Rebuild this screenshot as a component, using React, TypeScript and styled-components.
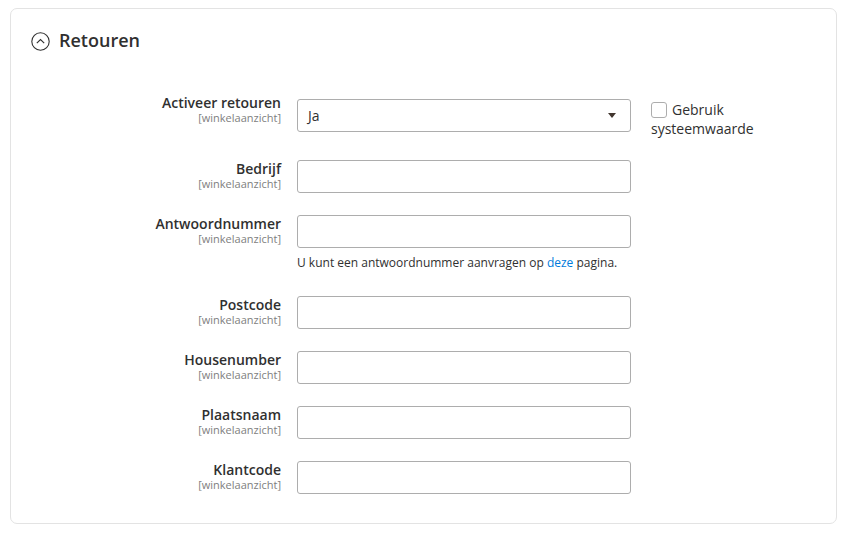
import React from "react";
import styled, { createGlobalStyle } from "styled-components";

const Global = createGlobalStyle`
  html, body { margin: 0; padding: 0; background: #ffffff; }
  body { font-family: "Open Sans", "Noto Sans", Arial, sans-serif; color: #303030; }
  * { box-sizing: border-box; }
`;

const Card = styled.section`
  margin: 8px 14px 14px 10px;
  border: 1px solid #e3e3e3;
  border-radius: 7px;
  padding: 20px 0 7px 0;
`;

const Heading = styled.div`
  display: flex;
  align-items: center;
  gap: 9px;
  padding-left: 20px;
  height: 24px;
  margin-bottom: 46px;
`;

const HeadingTitle = styled.h2`
  margin: 0;
  font-size: 18px;
  font-weight: 600;
  color: #303030;
  line-height: 24px;
  position: relative;
  top: -1px;
`;

const Form = styled.div`
  display: flex;
  flex-direction: column;
  gap: 22px;
  margin-bottom: 22px;
`;

const Row = styled.div`
  display: grid;
  grid-template-columns: 270px 334px 1fr;
  column-gap: 16px;
  align-items: start;
`;

const LabelCell = styled.div<{ $raise?: boolean }>`
  text-align: right;
  margin-top: ${(p) => (p.$raise ? "-5px" : "0")};
`;

const LabelText = styled.div`
  font-size: 14px;
  font-weight: 600;
  line-height: 17px;
  color: #303030;
`;

const Scope = styled.div`
  font-size: 11px;
  line-height: 13px;
  color: #808080;
`;

const Control = styled.div`
  display: flex;
  flex-direction: column;
`;

const Input = styled.input`
  width: 334px;
  height: 33px;
  border: 1px solid #adadad;
  border-radius: 3px;
  background: #fff;
  padding: 0 10px;
  font: inherit;
  font-size: 14px;
`;

const SelectBox = styled.div`
  width: 334px;
  height: 33px;
  border: 1px solid #adadad;
  border-radius: 3px;
  background: #fff;
  padding: 0 14px 0 10px;
  display: flex;
  align-items: center;
  justify-content: space-between;
  font-size: 14px;
  color: #303030;
`;

const Arrow = styled.span`
  width: 0;
  height: 0;
  border-left: 4px solid transparent;
  border-right: 4px solid transparent;
  border-top: 5px solid #41362f;
`;

const Note = styled.div`
  font-size: 12px;
  line-height: 18px;
  margin-top: 6px;
  margin-bottom: 2px;
  color: #303030;
`;

const Link = styled.a`
  color: #007bdb;
  text-decoration: none;
`;

const UseDefault = styled.label`
  margin-left: 4px;
  padding-top: 1px;
  font-size: 14px;
  line-height: 19px;
  color: #303030;
  max-width: 130px;
`;

const Check = styled.span`
  display: inline-block;
  width: 16px;
  height: 16px;
  border: 1px solid #adadad;
  border-radius: 3px;
  vertical-align: -3px;
  margin-right: 5px;
  background: #fff;
`;

const CollapseIcon = () => (
  <svg width="19" height="19" viewBox="0 0 19 19" aria-hidden="true">
    <circle cx="9.5" cy="9.5" r="8.7" fill="none" stroke="#303030" strokeWidth="1.1" />
    <path d="M5.8 11.2 L9.5 7.6 L13.2 11.2" fill="none" stroke="#303030" strokeWidth="1.1" />
  </svg>
);

type FieldProps = {
  label: string;
  children: React.ReactNode;
  extra?: React.ReactNode;
  raise?: boolean;
};

const Field = ({ label, children, extra, raise }: FieldProps) => (
  <Row>
    <LabelCell $raise={raise}>
      <LabelText>{label}</LabelText>
      <Scope>[winkelaanzicht]</Scope>
    </LabelCell>
    <Control>{children}</Control>
    {extra ?? <span />}
  </Row>
);

export default function App() {
  const plain = ["Postcode", "Housenumber", "Plaatsnaam", "Klantcode"];
  return (
    <>
      <Global />
      <Card>
        <Heading>
          <CollapseIcon />
          <HeadingTitle>Retouren</HeadingTitle>
        </Heading>
        <Form>
          <Field
            label="Activeer retouren"
            raise
            extra={
              <UseDefault>
                <Check />
                Gebruik systeemwaarde
              </UseDefault>
            }
          >
            <SelectBox>
              <span>Ja</span>
              <Arrow />
            </SelectBox>
          </Field>
          <Field label="Bedrijf">
            <Input />
          </Field>
          <Field label="Antwoordnummer">
            <Input />
            <Note>
              U kunt een antwoordnummer aanvragen op <Link href="#">deze</Link> pagina.
            </Note>
          </Field>
          {plain.map((l) => (
            <Field key={l} label={l}>
              <Input />
            </Field>
          ))}
        </Form>
      </Card>
    </>
  );
}
